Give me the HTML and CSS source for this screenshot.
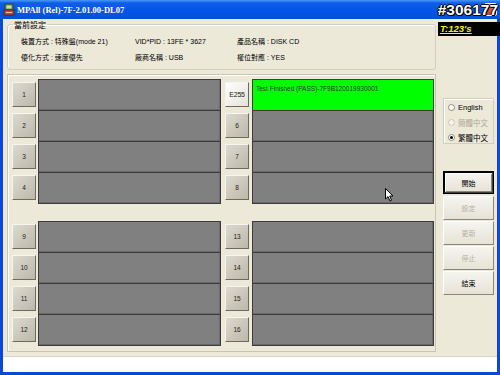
FILE: index.html
```html
<!DOCTYPE html>
<html lang="zh-Hant">
<head>
    <meta charset="UTF-8">
    <title>MPAll (Rel)-7F-2.01.00-DL07</title>
    <link rel="stylesheet" href="styles.css">
</head>
<body>
    <div class="window">
        <div class="titlebar">
            <svg class="app-icon" width="12" height="13" viewBox="0 0 12 13">
                <rect x="2" y="1" width="8" height="6" fill="#6b8f5a" stroke="#2c4a22" stroke-width="1"/>
                <rect x="3.5" y="2.5" width="5" height="3" fill="#c8e0b0"/>
                <rect x="1" y="7" width="10" height="5" fill="#b05040" stroke="#5a2018" stroke-width="1"/>
                <rect x="3" y="9" width="6" height="1" fill="#e8c0a0"/>
            </svg>
            <span class="title">MPAll (Rel)-7F-2.01.00-DL07</span>
            <span class="close-btn"></span>
            <span class="serial">#306177</span>
        </div>

        <div class="client">
            <div class="main">
                <fieldset class="settings">
                    <legend>當前設定</legend>
                    <div class="settings-grid">
                        <span>裝置方式 : 特殊盤(mode 21)</span>
                        <span>VID*PID : 13FE * 3627</span>
                        <span>產品名稱 : DISK CD</span>
                        <span>優化方式 : 速度優先</span>
                        <span>廠商名稱 : USB</span>
                        <span>權位對應 : YES</span>
                    </div>
                </fieldset>

                <div class="slots">
                    <div class="slot-group">
                        <div class="slot-col left">
                            <div class="slot"><button class="port">1</button><div class="bar"></div></div>
                            <div class="slot"><button class="port">2</button><div class="bar"></div></div>
                            <div class="slot"><button class="port">3</button><div class="bar"></div></div>
                            <div class="slot"><button class="port">4</button><div class="bar"></div></div>
                        </div>
                        <div class="slot-col right">
                            <div class="slot"><button class="port hot">E255</button><div class="bar pass">Test Finished (PASS)-7F9B120019930001</div></div>
                            <div class="slot"><button class="port">6</button><div class="bar"></div></div>
                            <div class="slot"><button class="port">7</button><div class="bar"></div></div>
                            <div class="slot"><button class="port">8</button><div class="bar"></div></div>
                        </div>
                    </div>
                    <div class="slot-group">
                        <div class="slot-col left">
                            <div class="slot"><button class="port">9</button><div class="bar"></div></div>
                            <div class="slot"><button class="port">10</button><div class="bar"></div></div>
                            <div class="slot"><button class="port">11</button><div class="bar"></div></div>
                            <div class="slot"><button class="port">12</button><div class="bar"></div></div>
                        </div>
                        <div class="slot-col right">
                            <div class="slot"><button class="port">13</button><div class="bar"></div></div>
                            <div class="slot"><button class="port">14</button><div class="bar"></div></div>
                            <div class="slot"><button class="port">15</button><div class="bar"></div></div>
                            <div class="slot"><button class="port">16</button><div class="bar"></div></div>
                        </div>
                    </div>
                    <!-- mouse pointer caught in the screenshot -->
                    <svg class="cursor" width="9" height="14" viewBox="0 0 9 14">
                        <path d="M0.5 0.5 L0.5 11 L3 8.6 L5 13 L6.6 12.3 L4.7 8 L8 8 Z" fill="#fff" stroke="#000" stroke-width="1" stroke-linejoin="round"/>
                    </svg>
                </div>
            </div>

            <div class="side">
                <div class="timer">T:123's</div>
                <div class="lang-box">
                    <label class="radio"><span class="dot"></span>English</label>
                    <label class="radio disabled"><span class="dot"></span>簡體中文</label>
                    <label class="radio"><span class="dot checked"></span>繁體中文</label>
                </div>
                <div class="actions">
                    <button class="action default">開始</button>
                    <button class="action" disabled>設定</button>
                    <button class="action" disabled>更新</button>
                    <button class="action" disabled>停止</button>
                    <button class="action">結束</button>
                </div>
            </div>
        </div>

        <div class="statusbar"></div>
    </div>
</body>
</html>
```

FILE: styles.css
```css
* {
    box-sizing: border-box;
}
body {
    margin: 0;
    font-family: "Liberation Sans", "Noto Sans CJK TC", sans-serif;
    font-size: 7px;
    color: #000;
}
.window {
    width: 500px;
    height: 375px;
    background: #0a48dc;
    display: flex;
    flex-direction: column;
    overflow: hidden;
}

/* title bar */
.titlebar {
    height: 19px;
    display: flex;
    align-items: center;
    padding-left: 3px;
    position: relative;
    background: linear-gradient(#4a98f8 0, #0d5eea 3px, #0456e6 50%, #0350dc 100%);
}
.app-icon {
    margin-right: 2px;
}
.title {
    font-family: "Liberation Serif", "Noto Sans CJK TC", serif;
    font-weight: bold;
    font-size: 8.5px;
    color: #fff;
}
.close-btn {
    position: absolute;
    right: 3px;
    top: 3px;
    width: 13px;
    height: 13px;
    border: 1px solid #fff;
    border-radius: 2px;
    background: linear-gradient(#e87a5c, #c7391c);
}
.serial {
    position: absolute;
    right: 2px;
    top: 1px;
    font-family: "Liberation Sans", sans-serif;
    font-weight: bold;
    font-size: 15.5px;
    color: #fff;
    text-shadow: -1px 0 #000, 1px 0 #000, 0 -1px #000, 0 1px #000, 1px 1px #000;
}

/* client area */
.client {
    flex: 1;
    display: flex;
    margin: 0 3px;
    background: #ece9d8;
    padding: 0 0 4px 4px;
}
.main {
    width: 429px;
    display: flex;
    flex-direction: column;
}
.settings {
    margin: 1px 0 0;
    padding: 0 0 0 13px;
    height: 50px;
    border: 1px solid #d0d0bf;
    border-radius: 3px;
    box-shadow: inset 1px 1px #fff;
}
.settings legend {
    font-family: "Noto Sans CJK TC", sans-serif;
    font-size: 8px;
    padding: 0 1px;
    margin-left: -8px;
    line-height: 9px;
}
.settings-grid {
    display: grid;
    grid-template-columns: 114px 102px auto;
    row-gap: 7px;
    margin-top: 8px;
    font-family: "Liberation Sans", "Noto Sans CJK TC", sans-serif;
    font-size: 7px;
    line-height: 9px;
}

.slots {
    position: relative;
    margin-top: 4px;
    flex: 1;
    border: 1px solid #c8c5b4;
    box-shadow: inset 1px 1px #fff;
    padding: 4px 1px 0 4px;
    display: flex;
    flex-direction: column;
    gap: 18px;
}
.slot-group {
    display: flex;
    gap: 4px;
}
.slot-col {
    display: flex;
    flex-direction: column;
}
.slot-col.left {
    width: 209px;
}
.slot-col.right {
    width: 209px;
}
.slot {
    height: 31px;
    display: flex;
    align-items: center;
    gap: 2px;
}
.port {
    width: 24px;
    height: 25px;
    padding: 0;
    font-family: "Liberation Sans", sans-serif;
    font-size: 6.5px;
    color: #222;
    border: 1px solid;
    border-color: #f6f5f0 #6e6a5e #6e6a5e #f6f5f0;
    background: linear-gradient(135deg, #dcd9ce, #bcb8aa);
}
.slot-col.right .port {
    width: 25px;
    margin-right: 1px;
}
.port.hot {
    background: linear-gradient(135deg, #ffffff, #e4e2d8);
    font-size: 7px;
    letter-spacing: -0.2px;
}
.bar {
    flex: 1;
    align-self: stretch;
    background: #808080;
    border: 1px solid #3c3c3c;
    box-shadow: inset -1px -1px #6a6a6a;
    margin-bottom: -1px;
    padding: 4px 0 0 3px;
    font-size: 6.5px;
    line-height: 9px;
    color: #224022;
    white-space: nowrap;
}
.slot-col.right .bar {
    flex: none;
    width: 182px;
}
.bar.pass {
    background: #00ff00;
    box-shadow: none;
}
.cursor {
    position: absolute;
    left: 377px;
    top: 113px;
}

/* right column */
.side {
    flex: 1;
    display: flex;
    flex-direction: column;
    align-items: flex-end;
    padding-top: 3px;
}
.timer {
    width: 62px;
    height: 14px;
    margin-right: -3px;
    background: #000;
    color: #f4f400;
    font-family: "Liberation Sans", sans-serif;
    font-style: italic;
    font-weight: bold;
    font-size: 9.5px;
    line-height: 13px;
    padding-left: 2px;
    text-decoration: underline;
}
.lang-box {
    width: 51px;
    height: 46px;
    margin: 62px 3px 0 0;
    border: 1px solid #d0d0bf;
    box-shadow: inset 1px 1px #fff;
    padding: 3px 0 0 4px;
    display: flex;
    flex-direction: column;
    gap: 5px;
}
.radio {
    display: flex;
    align-items: center;
    gap: 3px;
    height: 10px;
    font-family: "Liberation Sans", "Noto Sans CJK TC", sans-serif;
    font-size: 7.5px;
}
.radio.disabled {
    color: #aca899;
}
.dot {
    width: 7px;
    height: 7px;
    border-radius: 50%;
    border: 1px solid #8c8a80;
    background: #fff;
    display: flex;
    align-items: center;
    justify-content: center;
}
.radio.disabled .dot {
    border-color: #cac8bb;
    background: #f4f3ee;
}
.dot.checked::after {
    content: "";
    width: 3px;
    height: 3px;
    border-radius: 50%;
    background: #000;
}
.actions {
    margin: 27px 3px 0 0;
    display: flex;
    flex-direction: column;
    gap: 1px;
}
.action {
    width: 51px;
    height: 24px;
    padding: 0;
    font-family: "Noto Sans CJK TC", sans-serif;
    font-size: 7px;
    color: #000;
    border: 1px solid;
    border-color: #fff #8a877a #8a877a #fff;
    background: linear-gradient(#f5f4ef, #e6e3d6);
}
.action:disabled {
    color: #b4b1a4;
}
.action.default {
    height: 23px;
    margin-bottom: 1px;
    outline: 1px solid #000;
    outline-offset: -1px;
    border: 2px solid;
    border-color: #000 #404040 #404040 #000;
    box-shadow: inset 1px 1px #fff, inset -1px -1px #8a877a;
}

.statusbar {
    height: 16px;
    margin: 0 3px 3px;
    background: #fff;
    border-top: 1px solid #d8d5c6;
}
```
